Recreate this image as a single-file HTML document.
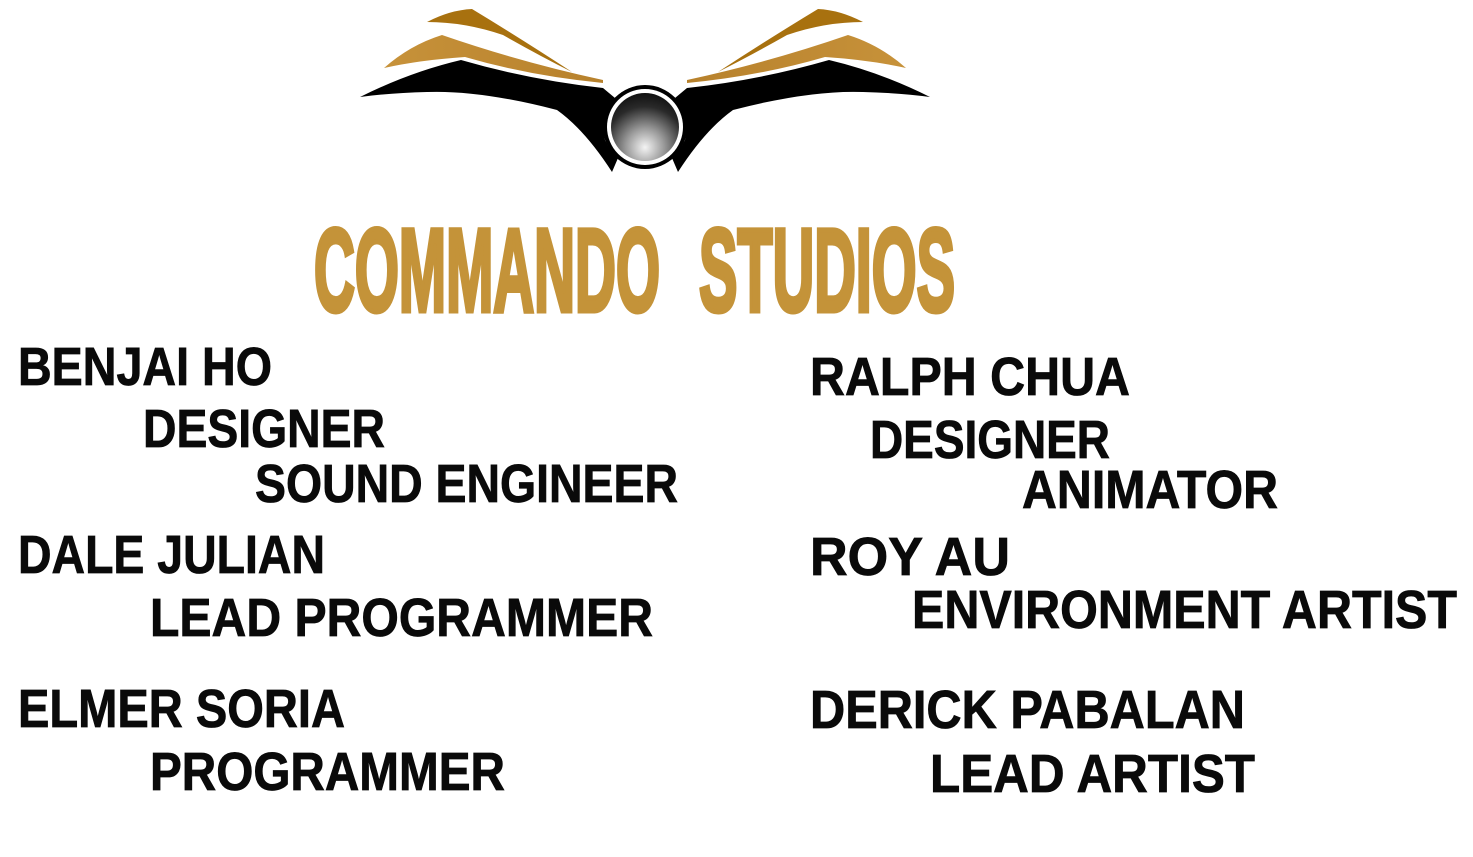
<!DOCTYPE html>
<html><head><meta charset="utf-8"><style>
html,body{margin:0;padding:0;background:#fff;width:1473px;height:857px;overflow:hidden}
svg{display:block}
.t{font-family:"Liberation Sans",sans-serif;font-weight:bold;font-size:54px;fill:#0a0a0a;stroke:#0a0a0a;stroke-width:0.8}
.g{font-family:"Liberation Sans",sans-serif;font-weight:bold;font-size:118px;fill:#c49339;stroke:#c49339;stroke-width:5;stroke-linejoin:miter}
</style></head><body>
<svg width="1473" height="857" viewBox="0 0 1473 857" xmlns="http://www.w3.org/2000/svg">
<defs>
<radialGradient id="ball" cx="0.5" cy="0.8" r="0.8">
<stop offset="0" stop-color="#f4f4f4"/><stop offset="0.35" stop-color="#9a9a9a"/><stop offset="0.75" stop-color="#2a2a2a"/><stop offset="1" stop-color="#111"/>
</radialGradient>
<linearGradient id="gm" x1="0" y1="0" x2="1" y2="0"><stop offset="0" stop-color="#c7923a"/><stop offset="1" stop-color="#b7812c"/></linearGradient>
<g id="wing">
<path d="M360 97 Q410 72 461 60 Q530 80 603 88 L615 98 Q600 115 605 140 Q610 152 618 158 L612 172 Q585 130 557 110 Q480 90 427 92 Q390 93 360 97 Z" fill="#000"/>
<path d="M384 68 Q410 45 442 35 Q520 62 603 80 L603 83 Q530 76 465 57 Q420 60 384 68 Z" fill="url(#gm)"/>
<path d="M427 22 Q450 10 472 9 Q520 38 572 72 Q540 56 503 35 Q465 22 427 22 Z" fill="#a8710f"/>
</g>
</defs>
<use href="#wing"/>
<use href="#wing" transform="translate(1290 0) scale(-1 1)"/>
<circle cx="645" cy="127" r="42" fill="#000"/>
<circle cx="645" cy="127" r="38" fill="#fff"/>
<circle cx="645" cy="127" r="34" fill="url(#ball)"/>
<text class="g" x="314" y="311" textLength="346" lengthAdjust="spacingAndGlyphs">COMMANDO</text>
<text class="g" x="699" y="311" textLength="256" lengthAdjust="spacingAndGlyphs">STUDIOS</text>
<text class="t" x="18" y="385" textLength="254" lengthAdjust="spacingAndGlyphs">BENJAI HO</text>
<text class="t" x="143" y="447" textLength="242" lengthAdjust="spacingAndGlyphs">DESIGNER</text>
<text class="t" x="255" y="502" textLength="423" lengthAdjust="spacingAndGlyphs">SOUND ENGINEER</text>
<text class="t" x="18" y="573" textLength="307" lengthAdjust="spacingAndGlyphs">DALE JULIAN</text>
<text class="t" x="150" y="636" textLength="503" lengthAdjust="spacingAndGlyphs">LEAD PROGRAMMER</text>
<text class="t" x="18" y="727" textLength="327" lengthAdjust="spacingAndGlyphs">ELMER SORIA</text>
<text class="t" x="150" y="790" textLength="355" lengthAdjust="spacingAndGlyphs">PROGRAMMER</text>
<text class="t" x="810" y="395" textLength="320" lengthAdjust="spacingAndGlyphs">RALPH CHUA</text>
<text class="t" x="870" y="458" textLength="240" lengthAdjust="spacingAndGlyphs">DESIGNER</text>
<text class="t" x="1022" y="508" textLength="256" lengthAdjust="spacingAndGlyphs">ANIMATOR</text>
<text class="t" x="810" y="575" textLength="200" lengthAdjust="spacingAndGlyphs">ROY AU</text>
<text class="t" x="912" y="628" textLength="545" lengthAdjust="spacingAndGlyphs">ENVIRONMENT ARTIST</text>
<text class="t" x="810" y="728" textLength="435" lengthAdjust="spacingAndGlyphs">DERICK PABALAN</text>
<text class="t" x="930" y="792" textLength="325" lengthAdjust="spacingAndGlyphs">LEAD ARTIST</text>
</svg>
</body></html>
